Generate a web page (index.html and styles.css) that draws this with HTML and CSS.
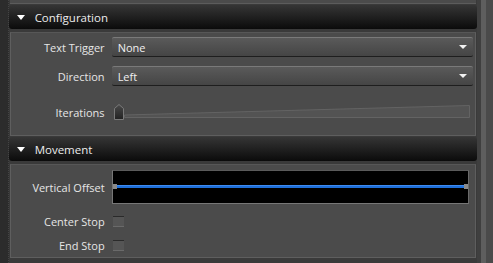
FILE: index.html
```html
<!DOCTYPE html>
<html lang="en">
<head>
    <meta charset="UTF-8">
    <meta name="viewport" content="width=device-width, initial-scale=1.0">
    <title>Properties</title>
    <link rel="stylesheet" href="styles.css">
</head>
<body>
    <div class="frame">
        <div class="gutter"></div>
        <div class="props">
            <div class="prev-end"></div>
            <div class="section-head">
                <span class="caret"></span>
                <span>Configuration</span>
            </div>
            <div class="panel panel-config">
                <div class="row">
                    <label>Text Trigger</label>
                    <div class="select"><span>None</span><span class="arrow"></span></div>
                </div>
                <div class="row">
                    <label>Direction</label>
                    <div class="select"><span>Left</span><span class="arrow"></span></div>
                </div>
                <div class="row row-slider">
                    <label>Iterations</label>
                    <div class="slider">
                        <svg class="thumb" width="10" height="16" viewBox="0 0 10 16">
                            <defs>
                                <linearGradient id="tg" x1="0" y1="0" x2="0" y2="1">
                                    <stop offset="0" stop-color="#4a4a4a"/>
                                    <stop offset="1" stop-color="#222"/>
                                </linearGradient>
                            </defs>
                            <path d="M0.5 15.5 V4.5 L5 0.5 L9.5 4.5 V15.5 Z" fill="url(#tg)" stroke="#7a7a7a"/>
                        </svg>
                        <svg class="track" viewBox="0 0 346 13" preserveAspectRatio="none">
                            <polygon points="0.5,10 345.5,0.5 345.5,12.5 0.5,12.5" fill="#535353" stroke="#636363" stroke-width="1"/>
                        </svg>
                    </div>
                </div>
            </div>
            <div class="section-head">
                <span class="caret"></span>
                <span>Movement</span>
            </div>
            <div class="panel panel-move">
                <div class="row row-curve">
                    <label>Vertical Offset</label>
                    <div class="curve">
                        <span class="pt"></span>
                        <span class="line"></span>
                        <span class="pt"></span>
                    </div>
                </div>
                <div class="row row-check">
                    <label>Center Stop</label>
                    <span class="check"></span>
                </div>
                <div class="row row-check">
                    <label>End Stop</label>
                    <span class="check"></span>
                </div>
            </div>
        </div>
        <div class="scroll">
            <div class="scroll-band"></div>
        </div>
    </div>
</body>
</html>
```

FILE: styles.css
```css
* {
    margin: 0;
    padding: 0;
    box-sizing: border-box;
}
body {
    background-color: #2e2e2e;
    font-family: "Open Sans", "Noto Sans", sans-serif;
    font-size: 11px;
    color: #e8e8e8;
    overflow: hidden;
}
.frame {
    display: flex;
    height: 263px;
}
.gutter {
    width: 9px;
    background-color: #2c2c2c;
    border-right: 1px dotted #444444;
}
.props {
    flex: 1;
    display: flex;
    flex-direction: column;
    background-color: #3a3a3a;
}
.prev-end {
    height: 4px;
    margin: 0 1px;
    background-color: #4b4b4b;
    border-bottom: 1px solid #5c5c5c;
}
.section-head {
    height: 24px;
    margin-top: 1px;
    display: flex;
    align-items: center;
    gap: 10px;
    padding-left: 8px;
    border-radius: 3px;
    background: linear-gradient(to bottom, #353535, #0b0b0b);
    font-size: 11.5px;
    color: #ececec;
}
.caret {
    width: 0;
    height: 0;
    border-left: 4px solid transparent;
    border-right: 4px solid transparent;
    border-top: 5px solid #ffffff;
}
.panel {
    margin: 3px 1px 0 1px;
    border: 1px solid #5e5e5e;
    border-top-color: #575757;
    background-color: #4b4b4b;
    display: flex;
    flex-direction: column;
}
.panel-config {
    height: 104px;
    padding-top: 4px;
    gap: 9px;
}
.panel-move {
    height: 94px;
    padding-top: 5px;
}
.row {
    display: grid;
    grid-template-columns: 94px 1fr;
    column-gap: 7px;
    align-items: center;
    padding-right: 2px;
}
.row label {
    text-align: right;
    color: #e6e6e6;
}
.select {
    height: 20px;
    display: flex;
    align-items: center;
    justify-content: space-between;
    padding: 0 6px 0 6px;
    border-radius: 2px;
    border-top: 1px solid #7a7a7a;
    border-bottom: 1px solid #1e1e1e;
    background: linear-gradient(to bottom, #5a5a5a, #454545);
    color: #f0f0f0;
}
.arrow {
    width: 0;
    height: 0;
    border-left: 4px solid transparent;
    border-right: 4px solid transparent;
    border-top: 4px solid #f2f2f2;
}
.row-slider {
    margin-top: 9px;
}
.slider {
    display: flex;
    align-items: flex-end;
    height: 16px;
    padding-left: 2px;
    padding-right: 3px;
}
.thumb {
    display: block;
    flex: none;
}
.track {
    display: block;
    flex: 1;
    height: 13px;
    margin-bottom: 2px;
}
.row-curve {
    padding-right: 6px;
}
.curve {
    height: 34px;
    background-color: #000000;
    border: 1px solid #777777;
    border-top-color: #5a5a5a;
    border-right-color: #6a6a6a;
    display: flex;
    align-items: center;
    padding-bottom: 2px;
}
.curve .line {
    flex: 1;
    height: 3px;
    background-color: #1f6fd8;
    border-top: 1px solid #3d8af0;
}
.curve .pt {
    width: 4px;
    height: 5px;
    background-color: #8a8a8a;
}
.row-check {
    margin-top: 10px;
}
.row-check + .row-check {
    margin-top: 9px;
}
.check {
    width: 11px;
    height: 11px;
    margin-left: 1px;
    background-color: #555555;
    border-top: 1px solid #2a2a2a;
    border-bottom: 1px solid #6a6a6a;
}
.scroll {
    width: 17px;
    background-color: #4a4a4a;
    border-left: 4px solid #3f3f3f;
    display: flex;
}
.scroll-band {
    width: 5px;
    background-color: #5e5e5e;
}
```
